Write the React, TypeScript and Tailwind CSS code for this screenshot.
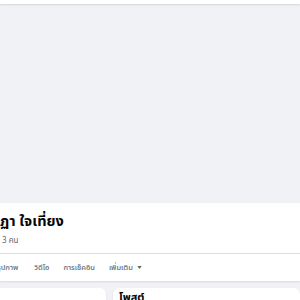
export default function App() {
  return (
    <div className="w-[300px] h-[300px] overflow-hidden bg-[#f0f2f5] font-['Noto_Sans_Thai','Noto_Sans','DejaVu_Sans',sans-serif]">
      {/* top bar */}
      <div className="h-[4px] bg-white shadow-[0_1px_2px_rgba(0,0,0,0.12)]"></div>

      {/* cover */}
      <div className="h-[199px]"></div>

      {/* header panel */}
      <div className="bg-white shadow-[0_1px_2px_rgba(0,0,0,0.1)]">
        <div className="h-[50px] pt-[8px]">
          <div className="text-[14.5px] leading-[22px] font-bold text-[#050505] whitespace-nowrap">ฏา ใจเที่ยง</div>
          <div className="mt-[3px] text-[8px] leading-[10px] text-[#65676b] pl-[2px]">3 คน</div>
        </div>
        <div className="h-px bg-[#dadde1]"></div>
        <div className="h-[27px] flex items-center text-[7.5px] font-medium text-[#65676b] whitespace-nowrap">
          <span className="-ml-[3px]">รูปภาพ</span>
          <span className="ml-[16px]">วิดีโอ</span>
          <span className="ml-[14px]">การเช็คอิน</span>
          <span className="ml-[14px] flex items-center gap-[4px]">
            เพิ่มเติม
            <svg width="5" height="3" viewBox="0 0 6 4"><path d="M0 0h6L3 4z" fill="#65676b" /></svg>
          </span>
        </div>
      </div>

      {/* content */}
      <div className="mt-[7px] flex gap-[7px]">
        <div className="w-[106px] h-[20px] bg-white rounded-tr-[6px] shadow-[0_1px_2px_rgba(0,0,0,0.1)]"></div>
        <div className="flex-1 h-[20px] bg-white rounded-t-[6px] shadow-[0_1px_2px_rgba(0,0,0,0.1)] pl-[6px] pt-[2px]">
          <div className="text-[11px] font-bold text-[#050505] leading-[16px]">โพสต์</div>
        </div>
      </div>
    </div>
  );
}
